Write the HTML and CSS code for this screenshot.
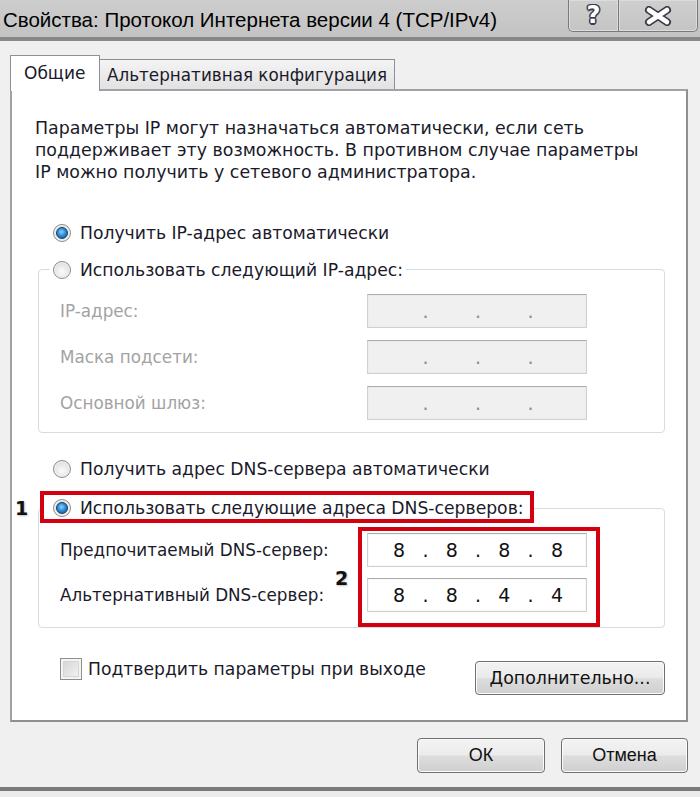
FILE: index.html
```html
<!DOCTYPE html>
<html lang="ru">
<head>
<meta charset="utf-8">
<title>Свойства: Протокол Интернета версии 4 (TCP/IPv4)</title>
<link rel="stylesheet" href="styles.css">
</head>
<body>
<div class="window">
  <header class="titlebar">
    <div class="title">Свойства: Протокол Интернета версии 4 (TCP/IPv4)</div>
    <div class="caption-buttons">
      <div class="cap-btn help">?</div>
      <div class="cap-btn close">
        <svg class="x-icon" width="28" height="20" viewBox="0 0 28 20" aria-hidden="true">
          <path d="M5 4 L23 16 M23 4 L5 16" stroke="#3a3a48" stroke-width="8" stroke-linecap="round" fill="none"/>
          <path d="M5 4 L23 16 M23 4 L5 16" stroke="#ffffff" stroke-width="4.6" stroke-linecap="round" fill="none"/>
        </svg>
      </div>
    </div>
  </header>
  <main class="client">
    <div class="tabs">
      <div class="tab active">Общие</div>
      <div class="tab">Альтернативная конфигурация</div>
    </div>
    <section class="panel">
      <p class="desc">Параметры IP могут назначаться автоматически, если сеть<br>поддерживает эту возможность. В противном случае параметры<br>IP можно получить у сетевого администратора.</p>

      <div class="radio-row r1"><span class="radio checked"></span><span>Получить IP-адрес автоматически</span></div>

      <div class="group g1">
        <div class="legend"><span class="radio"></span><span>Использовать следующий IP-адрес:</span></div>
        <div class="rows rows-ip">
          <span class="lbl disabled row-1">IP-адрес:</span>
          <div class="ip off row-1"><span class="oct"></span><span class="dot">.</span><span class="oct"></span><span class="dot">.</span><span class="oct"></span><span class="dot">.</span><span class="oct"></span></div>
          <span class="lbl disabled row-2">Маска подсети:</span>
          <div class="ip off row-2"><span class="oct"></span><span class="dot">.</span><span class="oct"></span><span class="dot">.</span><span class="oct"></span><span class="dot">.</span><span class="oct"></span></div>
          <span class="lbl disabled row-3">Основной шлюз:</span>
          <div class="ip off row-3"><span class="oct"></span><span class="dot">.</span><span class="oct"></span><span class="dot">.</span><span class="oct"></span><span class="dot">.</span><span class="oct"></span></div>
        </div>
      </div>

      <div class="radio-row r3"><span class="radio"></span><span>Получить адрес DNS-сервера автоматически</span></div>

      <div class="group g2">
        <div class="legend marked"><span class="mark mark-1">1</span><span class="radio checked"></span><span>Использовать следующие адреса DNS-серверов:</span></div>
        <div class="rows rows-dns">
          <span class="lbl row-1">Предпочитаемый DNS-сервер:</span>
          <div class="ip on row-1"><span class="oct">8</span><span class="dot">.</span><span class="oct">8</span><span class="dot">.</span><span class="oct">8</span><span class="dot">.</span><span class="oct">8</span></div>
          <span class="lbl row-2">Альтернативный DNS-сервер:</span>
          <div class="ip on row-2"><span class="oct">8</span><span class="dot">.</span><span class="oct">8</span><span class="dot">.</span><span class="oct">4</span><span class="dot">.</span><span class="oct">4</span></div>
          <div class="redbox"><span class="mark mark-2">2</span></div>
        </div>
      </div>

      <div class="check-row">
        <label class="check"><span class="checkbox"></span><span>Подтвердить параметры при выходе</span></label>
        <button class="btn btn-adv">Дополнительно...</button>
      </div>
    </section>
    <div class="dialog-buttons">
      <button class="btn btn-ok">ОК</button>
      <button class="btn btn-cancel">Отмена</button>
    </div>
  </main>
  <div class="frame-bottom"></div>
</div>
</body>
</html>
```

FILE: styles.css
```css
* { box-sizing: border-box; }
html, body { margin: 0; padding: 0; }
body {
  width: 700px;
  height: 797px;
  overflow: hidden;
  background: #f0f0f0;
  font-family: "DejaVu Sans", Tahoma, sans-serif;
  font-size: 17.2px;
  color: #1a1a2a;
}
.window {
  height: 797px;
  display: flex;
  flex-direction: column;
}

/* title bar */
.titlebar {
  height: 41px;
  flex: none;
  display: flex;
  justify-content: space-between;
  align-items: flex-start;
  background: linear-gradient(#cdcdcd, #c3c3c3);
  border-bottom: 4px solid #888888;
}
.title {
  font-family: "Liberation Sans", Arial, sans-serif;
  font-size: 20.5px;
  color: #000;
  padding: 8px 0 0 3px;
  white-space: nowrap;
}
.caption-buttons {
  display: flex;
  margin-right: 2px;
}
.cap-btn {
  height: 32px;
  display: flex;
  align-items: center;
  justify-content: center;
  border: 1px solid #7a7a7a;
  border-top: none;
  background: linear-gradient(#cfcfcf, #c4c4c4);
  box-shadow: inset 0 0 0 1px #dcdcdc;
}
.cap-btn.help {
  width: 50px;
  border-radius: 0 0 0 5px;
  border-right: none;
  padding-bottom: 1px;
  font-family: "DejaVu Sans", sans-serif;
  font-weight: bold;
  font-size: 24px;
  color: #fff;
  text-shadow: 1.5px 0 0 #3a3a48, -1.5px 0 0 #3a3a48, 0 1.5px 0 #3a3a48, 0 -1.5px 0 #3a3a48,
               1px 1px 0 #3a3a48, -1px -1px 0 #3a3a48, 1px -1px 0 #3a3a48, -1px 1px 0 #3a3a48;
}
.cap-btn.close { width: 80px; border-radius: 0 0 5px 0; }
.x-icon { display: block; }

/* client */
.client {
  flex: 1;
  min-height: 0;
  display: flex;
  flex-direction: column;
  padding: 14px 12px 14px 10px;
}
.tabs {
  display: flex;
  align-items: flex-end;
  height: 34px;
  flex: none;
}
.tab {
  height: 30px;
  padding: 0 7px;
  display: flex;
  align-items: center;
  border: 1px solid #8d9096;
  border-bottom: none;
  border-left: none;
  background: linear-gradient(#f4f4f4, #e2e2e2);
  font-size: 16.8px;
  white-space: nowrap;
}
.tab.active {
  position: relative;
  z-index: 1;
  width: 90px;
  height: 36px;
  margin-bottom: -2px;
  border-left: 1px solid #8d9096;
  padding: 0 0 2px 13px;
  background: #ffffff;
  font-size: 17px;
}
.panel {
  flex: none;
  height: 633px;
  background: #fff;
  border: 2px solid;
  border-color: #a0a2a8 #8d8f95 #8d8f95 #a0a2a8;
  padding: 26px 21px 25px 23px;
  display: flex;
  flex-direction: column;
}
.desc {
  margin: 0;
  font-size: 17.4px;
  line-height: 22px;
  white-space: nowrap;
}

/* radio */
.radio-row, .legend {
  display: flex;
  align-items: center;
  height: 22px;
  white-space: nowrap;
}
.radio-row { padding-left: 18px; }
.r1 { margin-top: 39px; }
.r3 { margin-top: 25px; }
.radio {
  width: 18px;
  height: 18px;
  border-radius: 50%;
  margin-right: 9px;
  flex: none;
  border: 1px solid #8c8c8c;
  background: radial-gradient(circle at 50% 60%, #fbfbfb 0%, #e6e6e6 55%, #cfcfcf 100%);
  box-shadow: inset 0 0 0 1px #f4f4f4;
  display: flex;
  align-items: center;
  justify-content: center;
}
.radio.checked::after {
  content: "";
  width: 10px;
  height: 10px;
  border-radius: 50%;
  background: radial-gradient(circle at 45% 40%, #8fd3ff 0%, #2e8ed8 45%, #0e4f93 100%);
  border: 1px solid #183a62;
}

/* group boxes */
.group {
  border: 1px solid #d5dde3;
  border-radius: 4px;
  margin-left: 3px;
  display: flex;
  flex-direction: column;
}
.g1 { margin-top: 26px; padding-bottom: 12px; }
.g2 { margin-top: 29px; padding-bottom: 15px; }
.legend {
  align-self: flex-start;
  background: #fff;
  margin-top: -11px;
  margin-left: 11px;
  padding: 0 3px;
}
.legend.marked {
  position: relative;
  height: 32px;
  margin-top: -18px;
  margin-left: 1px;
  padding: 2px 6px 0 9px;
  border: 4px solid #d3000f;
}
.mark {
  position: absolute;
  font-family: "DejaVu Sans", sans-serif;
  font-weight: bold;
  font-size: 19px;
  line-height: 22px;
  color: #111;
  text-shadow: 1px 1px 2px rgba(0,0,0,0.25);
}
.mark-1 { left: -29px; top: 2px; }
.mark-2 { left: -27px; top: 36px; }

.rows {
  display: grid;
  grid-template-columns: 307px 220px;
  padding-left: 21px;
}
.rows-ip { margin-top: 13px; grid-template-rows: repeat(3, 34px); row-gap: 12px; }
.rows-dns { margin-top: 10px; grid-template-rows: repeat(2, 34px); row-gap: 11px; }
.row-1 { grid-row: 1; }
.row-2 { grid-row: 2; }
.row-3 { grid-row: 3; }
.lbl {
  grid-column: 1;
  align-self: center;
  white-space: nowrap;
  font-size: 16.8px;
}
.lbl.disabled { color: #a3a3a3; }

.ip {
  grid-column: 2;
  display: flex;
  align-items: center;
  padding-left: 18px;
  border: 1px solid #d0d0d0;
  border-top-color: #ababab;
  box-shadow: inset 0 0 0 1px #ececec;
  font-family: "DejaVu Sans", sans-serif;
  font-size: 19px;
}
.ip.off { background: #f0f0f0; color: #8a8aa0; }
.ip.on { background: #fff; color: #111; box-shadow: inset 0 0 0 1px #f8f8f8; }
.oct, .dot {
  width: 26.3px;
  text-align: center;
  line-height: 30px;
}
.redbox {
  position: relative;
  grid-column: 2;
  grid-row: 1 / 3;
  margin: -6px -13px -15px -9px;
  border: 4px solid #d3000f;
  pointer-events: none;
}

/* checkbox row */
.check-row {
  margin-top: 33px;
  height: 34px;
  flex: none;
  display: flex;
  align-items: flex-start;
  justify-content: space-between;
}
.check {
  display: flex;
  align-items: center;
  height: 22px;
  margin-top: -3px;
  margin-left: 25px;
  white-space: nowrap;
}
.checkbox {
  width: 22px;
  height: 22px;
  margin-right: 6px;
  border: 1px solid #8e8f8f;
  box-shadow: inset 0 0 0 2px #f4f4f4, inset 0 0 0 3px #d6d6d6;
  background: linear-gradient(135deg, #d2d2d2, #f6f6f6);
}

/* buttons */
.btn {
  font-family: "DejaVu Sans", Tahoma, sans-serif;
  font-size: 17.4px;
  color: #111;
  height: 35px;
  border: 1px solid #707070;
  border-radius: 4px;
  background: linear-gradient(#f3f3f3 0%, #ebebeb 48%, #dddddd 52%, #cfcfcf 100%);
  box-shadow: inset 0 0 0 1px #fbfbfb;
  padding: 0;
}
.btn-adv { width: 190px; height: 34px; }
.dialog-buttons {
  margin-top: 16px;
  flex: none;
  display: flex;
  justify-content: flex-end;
  gap: 16px;
}
.btn-ok { width: 128px; font-family: "Liberation Sans", Arial, sans-serif; font-size: 18px; }
.btn-cancel { width: 127px; font-family: "Liberation Sans", Arial, sans-serif; font-size: 18px; }

.frame-bottom {
  height: 10px;
  flex: none;
  border-top: 4px solid #7a7a7a;
  background: #ececec;
}
```
